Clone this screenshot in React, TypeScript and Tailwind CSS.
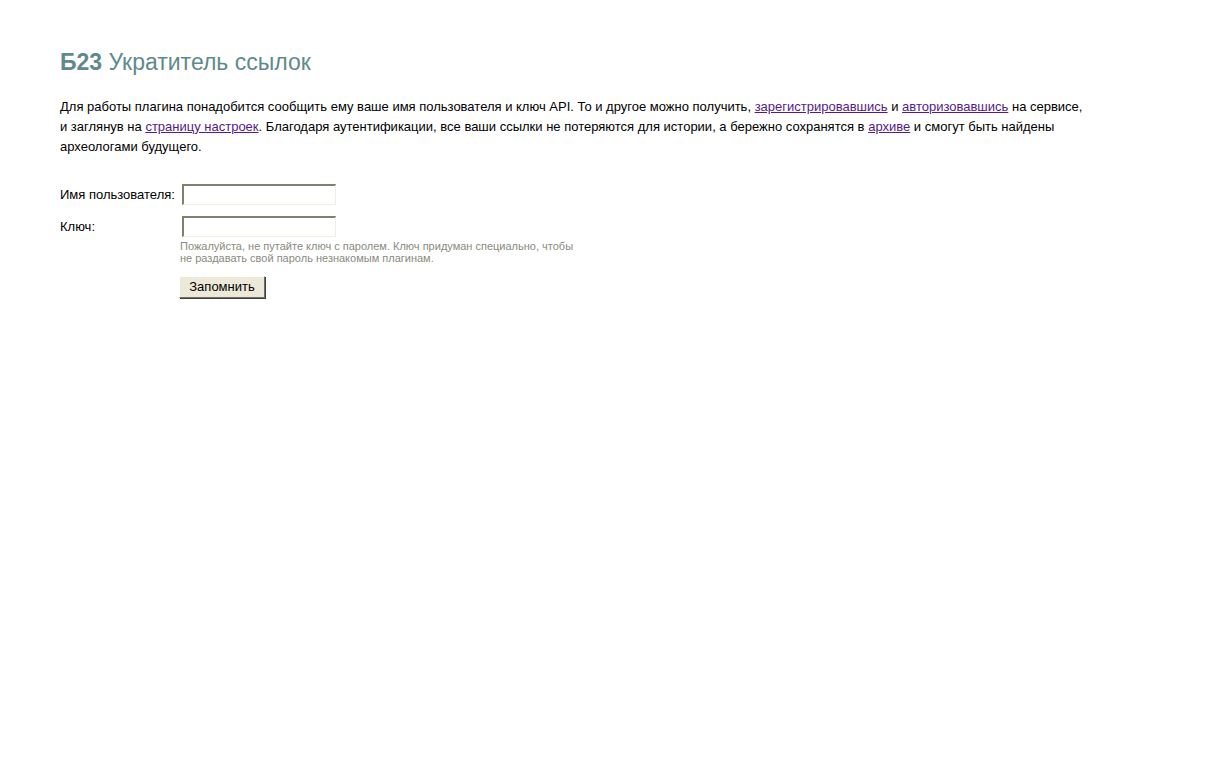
import React from "react";

export default function App() {
  const font = { fontFamily: '"Liberation Sans", Arial, sans-serif' };
  return (
    <div className="min-h-[761px] bg-white text-black" style={font}>
      <div className="pl-[60px] pt-[48px] pr-[120px]">
        <h1 className="text-[23px] leading-[28px] text-[#5f8a8b] font-normal">
          <span className="font-bold">Б23</span> Укратитель ссылок
        </h1>
        <p className="mt-[21px] text-[13px] leading-[20px] max-w-[1030px]">
          Для работы плагина понадобится сообщить ему ваше имя пользователя и ключ API. То и другое можно получить,{" "}
          <a href="#" className="text-[#551a8b] underline">зарегистрировавшись</a> и{" "}
          <a href="#" className="text-[#551a8b] underline">авторизовавшись</a> на сервисе,
          <br />
          и заглянув на <a href="#" className="text-[#551a8b] underline">страницу настроек</a>. Благодаря аутентификации, все ваши ссылки не потеряются для истории, а бережно сохранятся в{" "}
          <a href="#" className="text-[#551a8b] underline">архиве</a> и смогут быть найдены археологами будущего.
        </p>
        <div className="mt-[27px] grid grid-cols-[119px_1fr] text-[13px] leading-[16px]">
          <label className="flex items-center h-[21px] pt-[1px]">Имя пользователя:</label>
          <div className="pl-[3px]">
            <input
              type="text"
              className="block w-[154px] h-[21px] bg-white border-t-2 border-l-2 border-b border-r border-t-[#808070] border-l-[#808070] border-b-[#f1efe2] border-r-[#f1efe2] outline-none"
            />
          </div>
          <label className="flex items-center h-[21px] mt-[11px] pt-[1px]">Ключ:</label>
          <div className="pl-[3px] mt-[11px]">
            <input
              type="text"
              className="block w-[154px] h-[21px] bg-white border-t-2 border-l-2 border-b border-r border-t-[#808070] border-l-[#808070] border-b-[#f1efe2] border-r-[#f1efe2] outline-none"
            />
            <div className="-ml-[2px] mt-[3px] text-[11px] leading-[12px] text-[#8a8a80] w-[400px]">
              Пожалуйста, не путайте ключ с паролем. Ключ придуман специально, чтобы
              <br />
              не раздавать свой пароль незнакомым плагинам.
            </div>
            <button
              type="button"
              className="-ml-[3px] mt-[12px] w-[86px] h-[22px] bg-[#ece9d8] text-[13px] text-black border border-t-white border-l-white border-r-[#716f64] border-b-[#716f64] shadow-[1px_1px_0_#404040]"
            >
              Запомнить
            </button>
          </div>
        </div>
      </div>
    </div>
  );
}
